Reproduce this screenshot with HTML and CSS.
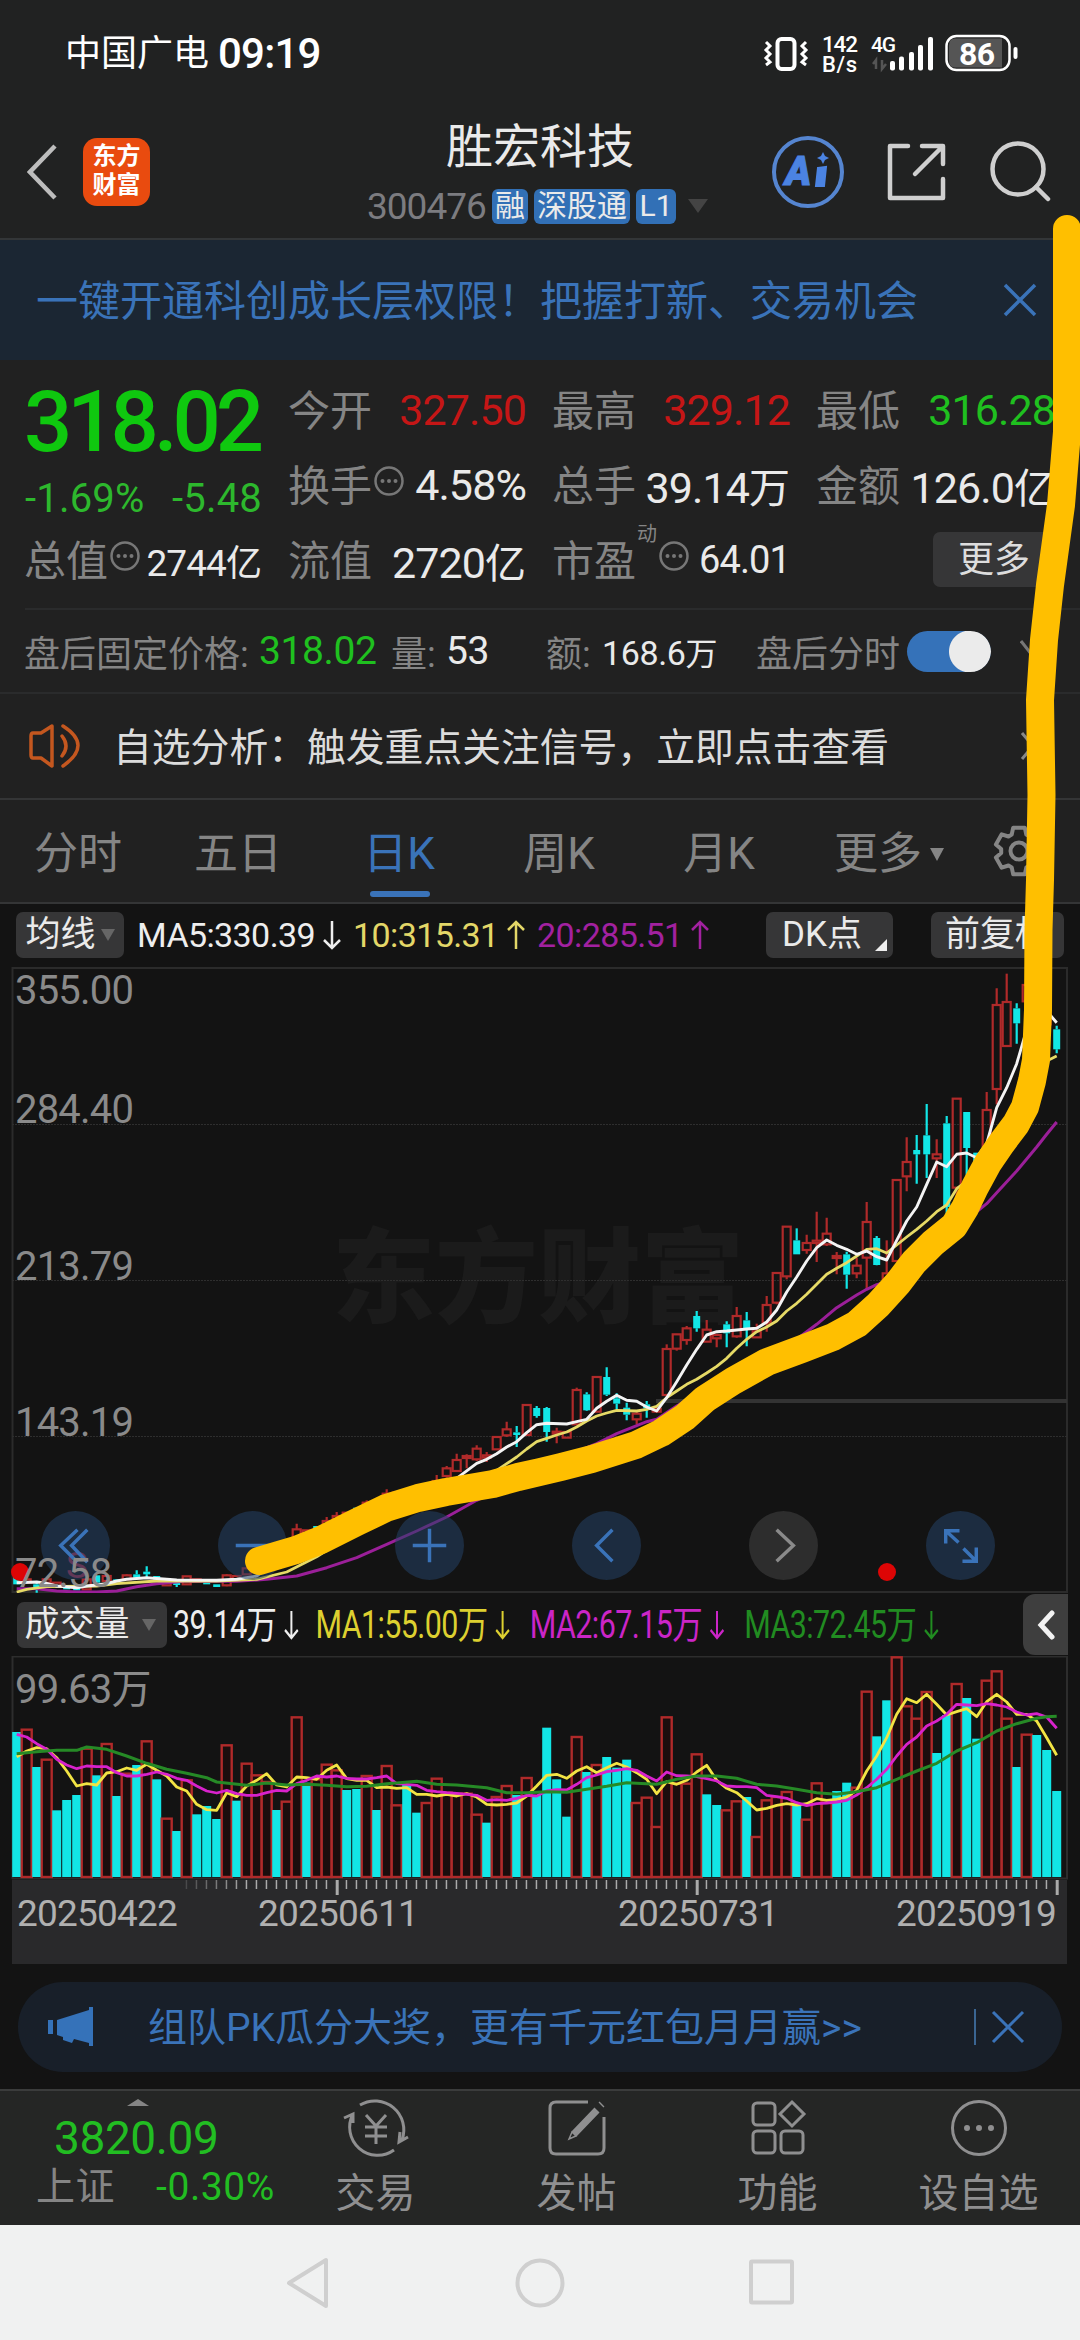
FILE: index.html
```html
<!DOCTYPE html>
<html lang="zh-CN">
<head>
<meta charset="utf-8">
<title>胜宏科技 300476</title>
<link rel="stylesheet" href="styles.css">
</head>
<body>
<div class="screen">
  <header class="top">
    <div class="status">
      <div class="carrier">中国广电 <span class="clock">09:19</span></div>
      <svg class="status-icons" width="260" height="60" viewBox="760 25 260 60" fill="none" stroke="#fff">
        <rect x="777.500" y="39" width="17" height="30" rx="4" stroke-width="4"/>
        <path d="M766 42l4 4-4 4 4 4-4 4 4 4-4 3M806 42l-4 4 4 4-4 4 4 4-4 4 4 3" stroke-width="3"/>
        <g fill="#fff" stroke="none">
          <text x="822" y="51.500" font-size="22.500" font-weight="500" textLength="36">142</text>
          <text x="822" y="72" font-size="22" font-weight="500" textLength="35">B/s</text>
          <text x="871" y="52" font-size="21" font-weight="500" textLength="25">4G</text>
          <rect x="890" y="61" width="5" height="9.500" rx="2"/><rect x="899" y="56.500" width="5" height="14" rx="2"/><rect x="909" y="52" width="5" height="18.500" rx="2"/><rect x="918" y="45" width="5" height="25.500" rx="2"/><rect x="928" y="37" width="5" height="33.500" rx="2"/>
        </g>
        <path d="M876 69V60l-3 4M882 60v9l4-5" stroke="#555" stroke-width="2.500"/>
        <rect x="946.500" y="36" width="63" height="34" rx="10" fill="#232323" stroke-width="2.500"/>
        <path d="M955 38.500h47v29h-47q-6 0-6-7v-15q0-7 6-7z" fill="#555" stroke="none"/>
        <rect x="1013.500" y="47" width="4" height="12" rx="2" fill="#fff" stroke="none"/>
        <text x="959" y="65" font-size="32" font-weight="700" fill="#fff" stroke="none" textLength="36">86</text>
      </svg>
    </div>
    <div class="titlebar">
      <div class="nav-left">
        <svg width="30" height="56" viewBox="0 0 30 56" fill="none" stroke="#bdbdbd" stroke-width="4.500"><path d="M28 2L3 28l25 26"/></svg>
        <div class="logo">东方<br>财富</div>
      </div>
      <div class="title">
        <h1>胜宏科技</h1>
        <div class="sub"><span class="code">300476</span><b>融</b><b class="w3">深股通</b><b class="w2">L1</b><i class="tri"></i></div>
      </div>
      <div class="actions">
        <svg width="74" height="74" viewBox="0 0 74 74" fill="none"><circle cx="37" cy="37" r="34" stroke="#5585d0" stroke-width="4"/><text x="14" y="50" font-size="40" font-weight="900" font-style="italic" fill="#4b83e2" stroke="#4b83e2" textLength="29">A</text><path d="M47 33l8-1-2 19h-8z" fill="#4b83e2" stroke="#4b83e2" stroke-width="2"/><path d="M52 17l2 4 4 2-4 2-2 4-2-4-4-2 4-2z" fill="#4b83e2"/></svg>
        <svg width="60" height="60" viewBox="0 0 60 60" fill="none" stroke="#cfcfcf" stroke-width="4.500" stroke-linecap="round" stroke-linejoin="round"><path d="M21 4H3v52h53V37M35 4h21v18M55 5L28 32"/></svg>
        <svg width="62" height="62" viewBox="0 0 62 62" fill="none" stroke="#cfcfcf" stroke-width="4.500" stroke-linecap="round"><circle cx="29" cy="28" r="25.500"/><path d="M47 46l12 12"/></svg>
      </div>
    </div>
  </header>

  <div class="banner"><span>一键开通科创成长层权限！把握打新、交易机会</span>
    <svg width="34" height="34" viewBox="0 0 34 34" fill="none" stroke="#3a73b9" stroke-width="3.500"><path d="M2 2l30 30M32 2L2 32"/></svg>
  </div>

  <section class="quote">
    <div class="price"><strong>318.02</strong><p><span>-1.69%</span><span>-5.48</span></p></div>
    <div class="cell"><label>今开</label><em class="red">327.50</em></div>
    <div class="cell"><label>最高</label><em class="red">329.12</em></div>
    <div class="cell"><label>最低</label><em class="green">316.28</em></div>
    <div class="cell"><label>换手<svg class="info" viewBox="0 0 32 32"><use href="#dots"/></svg></label><em>4.58%</em></div>
    <div class="cell"><label>总手</label><em>39.14<u>万</u></em></div>
    <div class="cell"><label>金额</label><em>126.0<u>亿</u></em></div>
    <div class="cell"><label>总值<svg class="info" viewBox="0 0 32 32"><use href="#dots"/></svg></label><em class="small">2744<u>亿</u></em></div>
    <div class="cell"><label>流值</label><em>2720<u>亿</u></em></div>
    <div class="cell"><label>市盈<sup>动</sup><svg class="info" viewBox="0 0 32 32"><use href="#dots"/></svg></label><em class="small pe">64.01</em></div>
    <div class="cell end"><button class="more">更多</button></div>
  </section>

  <section class="after">
    <label>盘后固定价格:</label><em class="green">318.02</em><label>量:</label><em>53</em><label>额:</label><em class="small">168.6<u>万</u></em><label>盘后分时</label><span class="toggle"></span>
    <svg width="14" height="28" viewBox="0 0 14 28" fill="none" stroke="#777" stroke-width="3"><path d="M1 4l11 14"/></svg>
  </section>

  <section class="analysis">
    <svg width="54" height="46" viewBox="0 0 54 46" fill="none" stroke="#c4571f" stroke-width="3.500" stroke-linecap="round" stroke-linejoin="round"><path d="M24 3L13 10H5q-2 0-2 3v19q0 3 2 3h8l11 8zM34 13q8 10 0 20M35 3q30 19 0 40"/></svg>
    <p>自选分析：触发重点关注信号，立即点击查看</p>
    <svg width="16" height="30" viewBox="0 0 16 30" fill="none" stroke="#888" stroke-width="3"><path d="M2 2l11 13L2 28"/></svg>
  </section>

  <nav class="tabs">
    <a>分时</a><a>五日</a><a class="on">日K</a><a>周K</a><a>月K</a><a>更多<i class="tri"></i></a>
    <svg width="54" height="54" viewBox="-27 -27 54 54" fill="none" stroke="#858585" stroke-width="4" stroke-linejoin="round"><path d="M-7.300-16.400L-5.800-23.300H5.800L7.300-16.400 10.500-14.500 17.300-16.700 23.100-6.600 17.800-1.900V1.900L23.100 6.600 17.300 16.700 10.500 14.500 7.300 16.400 5.800 23.300H-5.800L-7.300 16.400-10.500 14.500-17.300 16.700-23.100 6.600-17.800 1.900V-1.900L-23.100-6.600-17.300-16.700-10.500-14.500z"/><circle r="8.500"/></svg>
  </nav>

  <main class="charts">
    <div class="ma-row">
      <button class="pick">均线<i class="tri"></i></button>
      <span class="ma white">MA5:330.39<svg class="arr"><use href="#down"/></svg></span>
      <span class="ma yellow">10:315.31<svg class="arr"><use href="#up"/></svg></span>
      <span class="ma purple">20:285.51<svg class="arr"><use href="#up"/></svg></span>
      <button class="dk">DK点<i></i></button>
      <button class="fq">前复权</button>
    </div>
    <div class="kline">
      <div class="watermark">东方财富</div>
      <svg id="kline" width="1080" height="626" viewBox="0 966 1080 626" fill="none"></svg>
      <span class="axis a1">355.00</span><span class="axis a2">284.40</span><span class="axis a3">213.79</span><span class="axis a4">143.19</span><span class="sell">S</span>
      <div class="controls">
        <i><svg viewBox="0 0 70 70"><path d="M37 19L20 35l17 17M47 19L31 35l16 17"/></svg></i>
        <i><svg viewBox="0 0 70 70"><path d="M18 35h34"/></svg></i>
        <i><svg viewBox="0 0 70 70"><path d="M18 35h34M35 18v34"/></svg></i>
        <i><svg viewBox="0 0 70 70"><path d="M41 19L25 35l16 16"/></svg></i>
        <i class="off"><svg viewBox="0 0 70 70"><path d="M28 19l17 16-17 16"/></svg></i>
        <i><svg viewBox="0 0 70 70"><path d="M20 33V20h14M20 20l13 12M37 51h14V37M51 51L38 38"/></svg></i>
      </div>
      <span class="dot d1"></span><span class="dot d2"></span><span class="axis a5">72.58</span>
    </div>
    <div class="vol-row">
      <button class="pick wide">成交量<i class="tri"></i></button>
      <div class="vols">
        <span class="white">39.14万<svg class="arr"><use href="#down"/></svg></span>
        <span class="yellow2">MA1:55.00万<svg class="arr"><use href="#down"/></svg></span>
        <span class="magenta">MA2:67.15万<svg class="arr"><use href="#down"/></svg></span>
        <span class="green2">MA3:72.45万<svg class="arr"><use href="#down"/></svg></span>
      </div>
      <div class="fold"><svg width="18" height="30" viewBox="0 0 18 30" fill="none" stroke="#f2f2f2" stroke-width="5" stroke-linecap="round"><path d="M15 3L4 15l11 12"/></svg></div>
    </div>
    <div class="volume"><svg id="volume" width="1080" height="224" viewBox="0 1655 1080 224" fill="none"></svg><span class="axis v1">99.63万</span></div>
    <div class="dates"><svg id="ticks" width="1056" height="20" viewBox="12 1879 1056 20"></svg>
      <div><span>20250422</span><span>20250611</span><span>20250731</span><span>20250919</span></div>
    </div>
    <div class="promo">
      <svg width="46" height="40" viewBox="0 0 46 40" fill="#3572b9"><path d="M0 13h5v14H0zM9 13L41 3V0h4v39h-4v-3l-15-4-2 4-9-3v-3l-6-2z"/></svg>
      <span>组队PK瓜分大奖，更有千元红包月月赢&gt;&gt;</span><i></i>
      <svg width="34" height="34" viewBox="0 0 34 34" fill="none" stroke="#3a73b9" stroke-width="3"><path d="M2 2l30 30M32 2L2 32"/></svg>
    </div>
  </main>

  <footer class="bottom">
    <div class="index"><i></i><strong>3820.09</strong><p><label>上证</label><span>-0.30%</span></p></div>
    <a><svg viewBox="0 0 66 60"><path d="M17 7a29 29 0 0 1 42 35M51 52a28 28 0 0 1-41-36M1 20l9-4 0 9M65 39l-9 5 1-10M23 17l10 11 10-11M33 28v18M22 29h22M22 38h22"/></svg>交易</a>
    <a><svg viewBox="0 0 66 60"><path d="M44 4H12q-6 0-6 6v40q0 6 6 6h42q6 0 6-6V19"/><path d="M53 12L30 36M57 7l1-1" stroke-width="7"/><path d="M28 34l-3 7 7-3z" stroke-width="1.500"/></svg>发帖</a>
    <a><svg viewBox="0 0 66 60"><rect x="8" y="5" width="22" height="22" rx="4"/><rect x="8" y="33" width="22" height="22" rx="4"/><rect x="36" y="33" width="22" height="22" rx="4"/><path d="M47 4l12 12-12 12-12-12z"/></svg>功能</a>
    <a><svg viewBox="0 0 66 60"><circle cx="33" cy="30" r="26.500"/><path d="M21 30h0M33 30h0M45 30h0" stroke-width="6" stroke-linecap="round"/></svg>设自选</a>
  </footer>
  <div class="sysnav">
    <svg width="46" height="54" viewBox="0 0 46 54"><path d="M42 4v46L5 27z"/></svg>
    <svg class="home" width="54" height="54" viewBox="0 0 54 54"><circle cx="27" cy="27" r="22.500"/></svg>
    <svg width="50" height="54" viewBox="0 0 50 54"><rect x="5" y="5.500" width="41" height="41" rx="1"/></svg>
  </div>
  <svg class="scribble" width="1080" height="2340" viewBox="0 0 1080 2340"><path d="M1067 229L1067 432 1061 505 1050 585 1044 640 1040 700 1041.500 795 1040 880 1038.500 930 1038 1010 1036 1060 1032 1081 1025 1107 1016 1124 1001 1144 988 1163 975 1187 965 1208 954 1226 933 1243 914 1262 898 1283 878 1305 857 1324 833 1337 802 1349 767 1362 733 1381 705 1399 685 1417 661 1433 636 1445 592 1459 561 1467 540 1472 518 1477 493 1484 446 1492 418 1498 386 1508 357 1522 321 1540 296 1550 279 1555 259 1561"/></svg>
</div>
<svg width="0" height="0" class="defs"><defs>
  <symbol id="dots" viewBox="0 0 32 32"><circle cx="16" cy="16" r="13.500" fill="none" stroke="#777" stroke-width="2.500"/><path d="M9.500 16h0M16 16h0M22.500 16h0" stroke="#777" stroke-width="4" stroke-linecap="round"/></symbol>
  <symbol id="down" viewBox="0 0 20 30"><path d="M10 1v27M2 20l8 8 8-8" fill="none" stroke="currentColor" stroke-width="2.500"/></symbol>
  <symbol id="up" viewBox="0 0 20 30"><path d="M10 29V2M2 10l8-8 8 8" fill="none" stroke="currentColor" stroke-width="2.500"/></symbol>
</defs></svg>
<script src="chart.js"></script>
</body>
</html>
```
FILE: styles.css
```css
* { box-sizing: border-box; }
body { margin: 0; background: #212121; font-family: Roboto, "Noto Sans CJK SC", sans-serif; color: #eaeaea; }
em, i { font-style: normal; }
u { text-decoration: none; letter-spacing: 0; }
h1, p { margin: 0; font-weight: 400; }
button { border: 0; font: inherit; color: #eaeaea; background: #363637; border-radius: 7px; padding: 0; white-space: nowrap; }
svg { display: block; flex: none; }
.defs { position: absolute; }
.screen { position: relative; width: 1080px; height: 2340px; overflow: hidden; white-space: nowrap; }
.tri { display: inline-block; border: 10px solid transparent; border-top: 14px solid #444; border-bottom: 0; }
.red { color: #c51616; }
.green { color: #1fc01f; }

.top { height: 240px; background: #212222; border-bottom: 2px solid #333638; }
.status { height: 110px; display: flex; justify-content: space-between; padding: 25px 60px 0 65px; }
.carrier { font-size: 36px; line-height: 58px; color: #fff; display: flex; gap: 9px; }
.clock { font-size: 42px; font-weight: 500; letter-spacing: -.8px; line-height: 58px; }
.titlebar { display: grid; grid-template-columns: 340px 400px 340px; }
.nav-left { display: flex; align-items: center; padding: 9px 0 0 27px; gap: 26px; }
.logo { width: 67px; height: 68px; border-radius: 14px; background: #e94b0f; color: #fff; font-size: 24px; line-height: 29px; font-weight: 700; text-align: center; padding-top: 4px; }
.title { text-align: center; }
h1 { font-size: 47px; line-height: 72px; height: 76px; margin-top: 1px; }
.sub { display: flex; justify-content: flex-start; align-items: center; padding-left: 27px; height: 38px; font-size: 30px; gap: 6px; }
.sub .code { font-size: 37px; color: #7c7c80; width: 120px; letter-spacing: -1px; text-align: left; margin-right: -1px; }
.sub b { font-weight: 400; background: #3270b6; border-radius: 6px; height: 35px; line-height: 34px; width: 36px; }
.sub .w3 { width: 96px; }
.sub .w2 { width: 40px; }
.sub .tri { margin-left: 6px; }
.actions { display: flex; align-items: center; padding: 9px 0 0 31px; gap: 42px; }

.banner { height: 120px; background: #1b2633; color: #3a73b9; font-size: 42px; display: flex; align-items: center; justify-content: space-between; padding: 0 43px 0 36px; }
.banner span { margin-top: -5px; }

.quote { height: 250px; margin-left: 25px; border-bottom: 2px solid #2a2b2c; padding-top: 12px; display: grid; grid-template-columns: 237px 237px 237px 238px; grid-template-rows: 75px 75px 75px; column-gap: 27px; font-size: 42px; }
.cell { display: flex; justify-content: space-between; align-items: center; }
.cell.end { justify-content: flex-end; }
label { color: #858585; display: flex; align-items: center; }
.quote label { margin: -4px 0 0 -1px; }
em { font-size: 43px; letter-spacing: -.9px; }
em u { font-size: 41px; }
em.small { font-size: 37px; }
em.small u { font-size: 36px; }
.cell .pe { font-size: 38px; }
.info { width: 32px; height: 32px; margin-left: 1px; margin-bottom: 3px; }
sup { font-size: 20px; line-height: 20px; align-self: flex-start; margin: -3px 0 0 1px; }
.price { grid-row: span 2; color: #0fc80f; }
.price strong { display: block; font-size: 85px; font-weight: 500; letter-spacing: -5px; line-height: 100px; height: 100px; margin-left: -1px; }
.price p { display: flex; justify-content: space-between; font-size: 40px; line-height: 54px; color: #2db82d; letter-spacing: .2px; }
.more { width: 122px; height: 55px; font-size: 36px; line-height: 48px; color: #ddd; }

.after { height: 84px; border-bottom: 2px solid #2a2b2c; display: grid; grid-template-columns: 235px 132px 55px 100px 56px 154px 150px 114px 60px; align-items: center; padding-left: 24px; font-size: 36px; }
.after em { font-size: 39px; letter-spacing: -.4px; }
.after em.small { font-size: 34px; }
.after em.small u { font-size: 32px; }
.toggle { width: 84px; height: 41px; border-radius: 21px; margin-left: 1px; background: radial-gradient(circle at 63px 20.500px, #ebebeb 20.500px, #3572b9 21.500px); }
.analysis { height: 106px; border-bottom: 2px solid #343536; display: flex; align-items: center; padding-left: 28px; font-size: 38.800px; }
.analysis p { width: 938px; padding-left: 31px; margin-top: -5px; color: #dcdcdc; }
.tabs { position: relative; height: 104px; border-bottom: 2px solid #343536; display: grid; grid-template-columns: 158px 162px 160px 160px 160px 180px 70px; align-items: center; font-size: 44px; color: #858585; }
.tabs a { text-align: center; margin: -3px 2px 0 0; }
.tabs svg { margin-left: 12px; }
.tabs .on { color: #3a73b9; position: relative; }
.tabs .on::after { content: ""; position: absolute; left: 50px; bottom: -15px; width: 60px; height: 6px; border-radius: 3px; background: #3a73b9; }
.tabs .tri { border-width: 13px 7px 0; border-top-color: #858585; margin: 0 0 8px 8px; }

.charts { background: #131313; height: 1185px; }
.ma-row { height: 63px; display: flex; align-items: flex-start; padding: 8px 16px 0; font-size: 34px; }
.ma-row button { height: 46px; line-height: 44px; font-size: 35px; }
.pick .tri { border-width: 12px 7px 0; border-top-color: #666; margin: 0 0 5px 5px; }
.ma-row .pick { width: 108px; margin-right: 13px; }
.ma { display: flex; align-items: center; line-height: 46px; letter-spacing: -.6px; }
.arr { width: 20px; height: 30px; margin: 0 0 0 7px; }
.ma.white { width: 216px; }
.ma.yellow { width: 184px; color: #e3d768; }
.ma.purple { width: 229px; color: #a221a0; }
.white { color: #eee; }
.yellow2 { color: #ddd030; }
.magenta { color: #cb25c7; }
.green2 { color: #218c21; }
.ma-row .dk { width: 127px; position: relative; padding-right: 15px; }
.dk i { position: absolute; right: 6px; bottom: 7px; border: 6px solid #eee; border-left-color: transparent; border-top-color: transparent; }
.ma-row .fq { width: 133px; margin-left: 38px; }
.kline { position: relative; height: 626px; }
.watermark { position: absolute; left: 332px; top: 238px; font-size: 103px; line-height: 150px; font-weight: 900; color: #1b1b1b; }
.kline > svg { position: relative; }
.axis { position: absolute; left: 15px; font-size: 40px; line-height: 48px; color: #8a8a8a; letter-spacing: -.8px; }
.a1 { top: 0; } .a2 { top: 119px; } .a3 { top: 276px; } .a4 { top: 432px; } .a5 { top: 583px; } .v1 { top: 10px; }
.sell { position: absolute; left: 66px; top: 577px; font-size: 37px; line-height: 44px; color: #aa2a45; }
.controls { position: absolute; left: 41px; top: 544px; display: flex; gap: 108px; }
.controls i { width: 69px; height: 69px; border-radius: 50%; background: rgba(36, 66, 102, .55); }
.controls svg { width: 69px; fill: none; stroke: #3a73b9; stroke-width: 3.500; }
.controls .off { background: rgba(80, 80, 80, .42); }
.controls .off svg { stroke: #8a8a8a; }
.dot { position: absolute; width: 18px; height: 18px; border-radius: 50%; background: #dd0505; top: 596px; left: 11px; }
.d2 { left: 878px; }
.vol-row { height: 63px; display: flex; align-items: center; padding-left: 17px; font-size: 35px; }
.vol-row .pick { width: 150px; height: 46px; line-height: 42px; margin-right: 6px; padding-right: 4px; }
.vol-row .tri { margin-left: 12px; }
.vols { width: 850px; height: 60px; font-size: 38px; line-height: 58px; display: grid; grid-template-columns: 178px 268px 268px 260px; transform: scaleX(.8); transform-origin: left; letter-spacing: -.7px; }
.vols span { display: flex; align-items: center; }
.vols .arr { width: 24px; }
.fold { width: 45px; height: 61px; border-radius: 12px 0 0 12px; background: #3e3e3e; display: flex; align-items: center; justify-content: center; }
.volume { position: relative; height: 224px; }
.dates { width: 1055px; height: 84px; margin-left: 12px; background: #29292b; color: #b0b0b0; font-size: 37px; letter-spacing: -.8px; }
.dates div { display: grid; grid-template-columns: 241px 360px 278px 160px; line-height: 28px; padding-left: 5px; }
.dates span:last-child { text-align: right; }
.promo { height: 90px; margin: 18px 18px 0; border-radius: 45px; background: #181f29; color: #3a73b9; font-size: 39px; display: flex; align-items: center; padding-left: 30px; }
.promo span { padding-left: 54px; width: 880px; margin-top: -7px; }
.promo i { width: 2px; height: 36px; background: #3a6592; margin-right: 15px; }

.bottom { height: 136px; border-top: 2px solid #3b3c3c; background: #252625; display: grid; grid-template-columns: 275px repeat(4, 201px); }
.bottom a { display: flex; flex-direction: column; align-items: center; color: #8f8f90; font-size: 40px; line-height: 50px; padding-top: 7px; }
.bottom a svg { width: 66px; height: 60px; margin-bottom: 11px; fill: none; stroke: #8f8f90; stroke-width: 3; }
.index { color: #22bd22; }
.index > i { display: block; width: 22px; border: 11px solid transparent; border-top: 0; border-bottom: 7px solid #858585; margin: 8px 0 0 127px; }
.index strong { display: block; font-size: 46px; font-weight: 400; letter-spacing: -.4px; line-height: 50px; margin: 7px 0 0 54px; }
.index p { display: flex; justify-content: space-between; padding-left: 36px; font-size: 39px; line-height: 48px; letter-spacing: .6px; }
.sysnav { height: 116px; background: #f0f1f1; display: flex; justify-content: center; align-items: center; gap: 181px; padding: 0 1px 0 0; }
.sysnav svg { fill: none; stroke: #cfcfcf; stroke-width: 4; stroke-linejoin: round; }
.sysnav .home { margin: 0 -2px 0 2px; }
.scribble { position: absolute; left: 0; top: 0; pointer-events: none; }
.scribble path { fill: none; stroke: #ffbf00; stroke-width: 28; stroke-linecap: round; stroke-linejoin: round; }
```
FILE: chart.js
```js
// Bar centres are 10px apart; vertical data is kept in thirds of a pixel.
const X = i => 16.7 + 10 * i;
const K = y => 960 + y / 3;
const V = y => 1640 + y / 3;
const RED = '#b02a2a', CYAN = '#12e6e6';

// colour, body top, body bottom, wick top, wick bottom
const candles = {
  0: 'c 1845 1870', 1: 'r 1855 1865', 2: 'c 1870 1885 1865 1895', 3: 'r 1855 1865', 4: 'r 1865 1875', 5: 'c 1875 1885', 6: 'c 1880 1888', 7: 'r 1855 1885', 8: 'c 1843 1865', 9: 'r 1845 1860', 10: 'c 1855 1862', 11: 'r 1843 1855 1840 1855', 12: 'c 1840 1850 1828 1852', 13: 'c 1832 1840 1816 1850', 14: 'c 1845 1856', 15: 'r 1860 1873', 16: 'c 1866 1872 1860 1878', 17: 'r 1846 1870', 18: 'r 1855 1862', 19: 'c 1865 1870', 20: 'c 1870 1878', 21: 'r 1843 1873 1840 1876', 22: 'r 1845 1855', 23: 'r 1822 1840', 24: 'r 1800 1820', 25: 'r 1780 1800', 26: 'r 1760 1780', 27: 'c 1750 1770', 28: 'r 1705 1730 1688 1735', 29: 'r 1708 1720', 30: 'c 1695 1715', 31: 'r 1680 1700 1668 1705', 32: 'r 1665 1690 1653 1690', 33: 'r 1655 1670', 34: 'c 1640 1660', 35: 'r 1625 1640 1618 1640', 36: 'r 1620 1640', 37: 'r 1598 1625 1585 1630', 38: 'r 1595 1610 1590 1615', 39: 'c 1600 1615', 40: 'r 1590 1610', 41: 'r 1575 1595', 42: 'r 1560 1580 1542 1585', 43: 'r 1522 1545 1515 1550', 44: 'r 1497 1530 1478 1532', 45: 'r 1485 1491 1480 1522', 46: 'r 1463 1495 1453 1500', 47: 'r 1483 1490 1473 1503', 48: 'r 1428 1465', 49: 'r 1405 1423 1382 1428', 50: 'c 1414 1422 1395 1458', 51: 'r 1332 1422', 52: 'c 1341 1365 1335 1370', 53: 'c 1341 1413 1338 1442', 54: 'r 1412 1418 1400 1447', 55: 'r 1413 1430', 56: 'r 1287 1390 1280 1390', 57: 'c 1300 1348 1294 1350', 58: 'r 1248 1352', 59: 'c 1248 1301 1219 1305', 60: 'c 1312 1328 1297 1345', 61: 'c 1340 1361 1325 1378', 62: 'r 1358 1375 1350 1390', 63: 'c 1330 1342 1320 1370', 64: 'r 1343 1352', 65: 'r 1164 1302 1150 1302', 66: 'r 1120 1163 1120 1169', 67: 'r 1102 1137 1095 1151', 68: 'c 1065 1102 1050 1112', 69: 'r 1106 1142 1077 1142', 70: 'r 1122 1132 1118 1159', 71: 'c 1090 1117 1081 1159', 72: 'r 1065 1126 1038 1130', 73: 'c 1078 1107 1053 1156', 74: 'r 1111 1129 1088 1129', 75: 'r 1032 1085 1005 1112', 76: 'r 936 1025 936 1030', 77: 'r 797 946 797 955', 78: 'c 838 880 802 880', 79: 'r 846 867 821 878', 80: 'r 839 846 752 903', 81: 'r 818 850 770 855', 82: 'r 885 891 873 940', 83: 'c 880 941 872 983', 84: 'r 914 937 890 952', 85: 'r 783 890 723 985', 86: 'c 831 912 825 913', 87: 'r 937 960 838 960', 88: 'r 657 900', 89: 'r 603 646 529 691', 90: 'c 567 580 522 668', 91: 'c 523 580 429 651', 92: 'r 580 592 535 651', 93: 'c 487 738 465 761', 94: 'r 413 680 413 726', 95: 'c 453 561 453 660', 96: 'c 575 630', 97: 'r 447 570 393 570', 98: 'r 132 384 82 430', 99: 'r 123 255 38 255', 100: 'c 142 187 127 248', 101: 'r 72 121', 102: 'c 130 170', 103: 'r 110 190', 104: 'c 205 265 194 277'
};
const ma5 = [[0,1865],[2,1863],[3,1867],[4,1875],[6,1880],[7,1875],[9,1868],[10,1860],[11,1855],[13,1850],[16,1857],[20,1858],[22,1855],[24,1845],[28,1760],[34,1650],[40,1600],[44,1552],[46,1507],[47,1495],[48,1478],[49,1458],[50,1442],[51,1415],[52,1391],[53,1387],[55,1389],[56,1382],[57,1375],[58,1342],[59,1321],[60,1303],[61,1318],[62,1321],[63,1338],[64,1350],[65,1310],[66,1262],[67,1212],[68,1165],[69,1122],[70,1112],[71,1110],[72,1107],[73,1104],[74,1102],[75,1083],[76,1047],[77,993],[78,948],[79,900],[80,860],[81,837],[82,853],[83,865],[84,880],[85,870],[86,887],[87,897],[88,838],[89,780],[90,738],[91,670],[92,603],[93,617],[94,580],[95,576],[96,590],[97,548],[98,440],[99,380],[100,308],[101,205],[102,150],[103,150],[104,185]];
const ma10 = [[0,1893],[1,1885],[3,1877],[8,1875],[10,1868],[14,1860],[20,1860],[24,1855],[27,1833],[30,1787],[34,1710],[40,1640],[45,1570],[48,1528],[49,1508],[50,1488],[51,1464],[52,1442],[53,1432],[54,1422],[55,1413],[56,1398],[57,1380],[58,1365],[59,1356],[60,1348],[62,1350],[63,1345],[64,1336],[65,1310],[66,1290],[67,1270],[68,1255],[69,1236],[70,1216],[71,1192],[72,1162],[73,1135],[74,1112],[75,1098],[76,1080],[77,1050],[78,1027],[79,1000],[80,970],[81,940],[82,922],[83,905],[84,885],[85,865],[86,863],[87,876],[88,852],[89,828],[90,805],[91,780],[92,752],[93,732],[94,683],[95,660],[96,635],[98,570],[100,450],[102,340],[103,300],[104,285]];
const ma20 = [[0,1883],[2,1883],[4,1890],[6,1893],[8,1893],[10,1890],[12,1877],[14,1868],[17,1860],[22,1861],[25,1855],[28,1845],[31,1820],[34,1790],[37,1750],[40,1710],[43,1668],[46,1618],[50,1560],[55,1485],[57,1460],[58,1448],[60,1418],[63,1382],[64,1375],[66,1335],[68,1300],[73,1210],[78,1135],[80,1090],[82,1040],[84,1002],[85,985],[86,971],[87,963],[92,850],[97,728],[98,695],[100,630],[102,558],[103,520],[104,483]];

const volumes = 'c273 r263 c378 r353 c508 c477 c462 r320 c403 r306 c465 r395 c372 r298 c415 r530 c570 r415 c520 c495 c534 r310 c479 r365 r400 r420 c507 r479 r226 c425 r412 r368 r385 c447 c444 r402 c507 r372 r490 c430 c515 r483 r410 r452 r455 r455 r518 c545 r465 r432 c462 r408 c462 c260 c415 c527 r285 c393 r369 c348 c380 c356 r483 r467 r555 r226 r425 r425 r337 c460 c492 r505 r478 c468 r585 r475 r465 r450 c490 r533 r424 r475 c450 c425 r437 r149 c286 c178 r46 r193 r230 r150 c336 c222 r126 c171 c293 r116 r88 r230 c378 r278 c282 c327 c450'.split(' ');
const vma1 = [347,330,320,323,350,390,435,428,432,396,392,381,388,370,388,405,438,450,490,506,508,455,467,435,418,398,432,438,408,410,415,388,372,413,418,418,440,438,442,440,460,460,465,460,465,458,468,490,492,490,486,465,435,403,400,412,390,377,395,380,367,378,395,415,458,422,430,418,393,373,418,442,455,480,507,502,493,488,492,488,473,478,475,468,448,390,345,290,220,173,185,160,190,222,212,203,227,182,160,183,220,220,240,290,343];
const vma2 = [280,288,308,325,355,372,383,375,377,377,395,405,405,400,393,400,412,418,435,450,456,448,458,463,463,455,448,450,428,418,405,408,405,412,414,414,410,405,428,430,433,448,452,455,457,460,463,478,476,478,472,463,465,450,446,447,430,410,402,392,388,383,388,405,420,393,404,405,407,413,420,435,437,437,440,463,467,472,485,494,488,486,483,478,462,440,415,385,345,310,288,255,240,220,190,192,194,188,192,198,213,222,218,228,262];
const vma3 = [[0,338],[2,332],[4,328],[6,328],[7,318],[9,325],[11,345],[13,367],[15,385],[17,397],[19,410],[20,423],[23,433],[25,426],[27,432],[29,430],[31,433],[33,437],[35,436],[37,428],[38,426],[40,421],[42,430],[44,432],[47,440],[49,455],[51,455],[53,452],[55,454],[57,445],[59,436],[61,425],[64,430],[66,415],[68,405],[70,405],[72,412],[74,430],[76,435],[78,445],[80,455],[82,460],[84,452],[86,440],[88,415],[90,390],[92,367],[94,330],[96,305],[98,270],[100,248],[102,232],[103,227],[104,226]];

const rect = (x, y, w, h, attrs) => `<rect x="${x}" y="${y}" width="${w}" height="${h}" ${attrs}/>`;
const line = (pts, f, color, w) => `<polyline points="${pts.map(([i, y]) => X(i).toFixed(1) + ',' + f(y).toFixed(1)).join(' ')}" stroke="${color}" stroke-width="${w}" stroke-linejoin="round"/>`;
const seq = a => a.map((y, i) => [i, y]);

let k = '<path d="M12.500 1591V967H1067V1591z" stroke="#2b2b2b" stroke-width="2"/>';
for (const y of [1123.5, 1279.5, 1435.5]) k += `<path d="M12 ${y}H1067" stroke="#2e2e2e" stroke-dasharray="2 1"/>`;
k += '<path d="M656 1400H1067" stroke="#333" stroke-width="4"/>';
for (const i in candles) {
  const [c, ...n] = candles[i].split(' ');
  const [t, b, h = t, l = b] = n.map(Number), x = X(+i);
  const color = c === 'r' ? RED : CYAN;
  k += `<path d="M${x} ${K(h)}V${K(t)}M${x} ${K(b)}V${K(l)}" stroke="${color}" stroke-width="2.200"/>`;
  if (c === 'r') k += rect(x - 4, K(t), 8, Math.max((b - t) / 3, 1), `stroke="${RED}" stroke-width="2.200"`);
  else k += rect(x - 3.5, K(t), 7, (b - t) / 3, `fill="${CYAN}"`);
}
k += line(ma20, K, '#9b1f99', 3) + line(ma10, K, '#e6da66', 2.8) + line(ma5, K, '#f4f4f4', 2.9);
document.getElementById('kline').innerHTML = k;

let v = '<path d="M12.500 1878V1655.500H1067V1877.500H12" stroke="#2d2d2d" stroke-width="2"/>';
volumes.forEach((s, i) => {
  const y = V(+s.slice(1)), x = X(i);
  if (s[0] === 'r') v += rect(x - 5, y + 1, 10, 1875 - y, `fill="#1b0d0d" stroke="${RED}" stroke-width="2.400"`);
  else v += rect(x - 4.5, y, 9, 1876 - y, `fill="${CYAN}"`);
});
v += line(seq(vma1), V, '#f2e444', 2.8) + line(seq(vma2), V, '#d822cc', 2.8) + line(vma3, V, '#268a26', 3);
document.getElementById('volume').innerHTML = v;

let t = '';
for (let i = 17; i <= 104; i++) {
  const major = i % 36 === 32;
  t += rect(X(i) - 1, 1879, major ? 3 : 1.5, major ? 15 : 9, `fill="#aaa" opacity="${Math.min(1, (i - 15) / 8)}"`);
}
document.getElementById('ticks').innerHTML = t;
```
